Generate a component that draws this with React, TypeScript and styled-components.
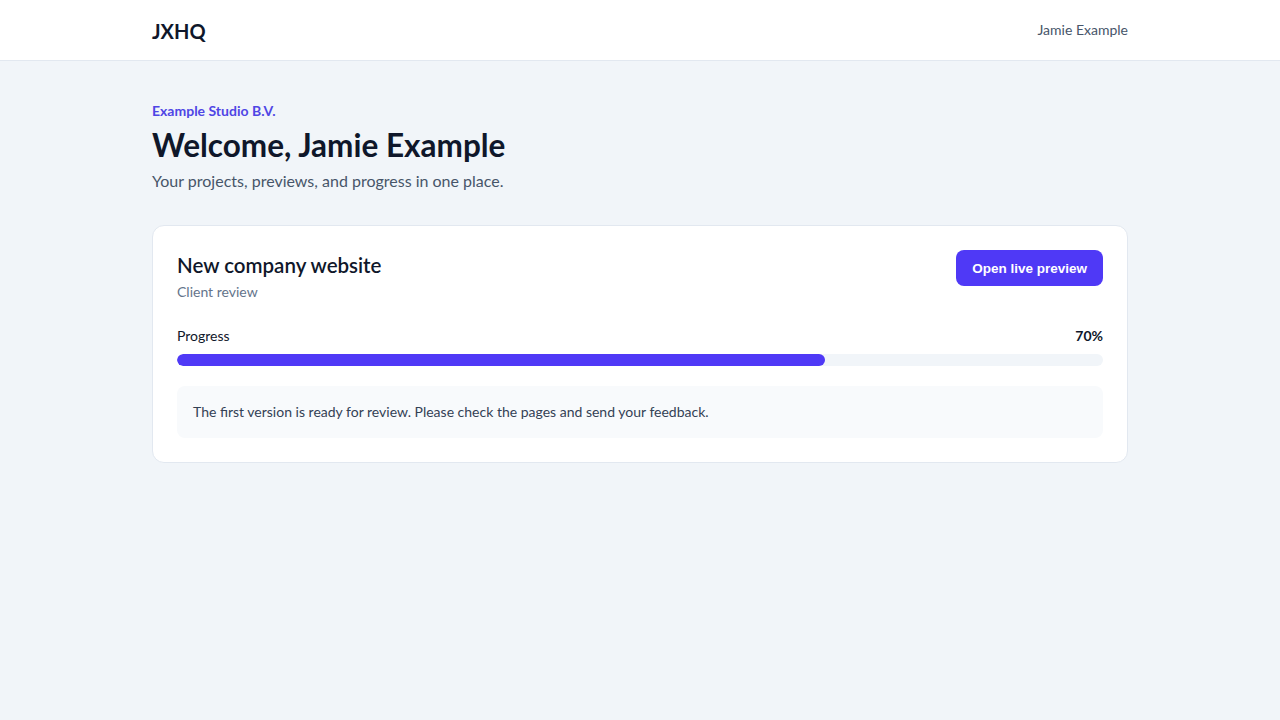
import styled, { createGlobalStyle } from "styled-components";

const GlobalStyle = createGlobalStyle`
  body {
    margin: 0;
    background-color: #f1f5f9;
    font-family: Lato, "Open Sans", sans-serif;
    line-height: 20px;
    color: #0f172a;
  }
`;

const Header = styled.header`
  background-color: white;
  border-bottom: 1px solid #e2e8f0;
  height: 61px;
  box-sizing: border-box;
`;

const Wrap = styled.div`
  width: 976px;
  margin: 0 auto;
`;

const HeaderInner = styled(Wrap)`
  height: 100%;
  display: flex;
  align-items: center;
  justify-content: space-between;
`;

const Logo = styled.div`
  font-size: 20px;
  line-height: 28px;
  font-weight: 700;
  color: #0f172a;
  margin-top: 2px;
`;

const UserName = styled.div`
  font-size: 14px;
  color: #475569;
`;

const Main = styled(Wrap)`
  padding-top: 40px;
`;

const Company = styled.div`
  font-size: 14px;
  line-height: 20px;
  font-weight: 700;
  color: #4f46e5;
`;

const Title = styled.h1`
  margin: 4px 0 0;
  font-size: 31.5px;
  line-height: 40px;
  font-weight: 700;
  color: #0f172a;
`;

const Subtitle = styled.p`
  margin: 4px 0 0;
  font-size: 16px;
  line-height: 24px;
  color: #475569;
`;

const Card = styled.section`
  margin-top: 32px;
  background-color: white;
  border: 1px solid #e2e8f0;
  border-radius: 12px;
  padding: 24px;
`;

const CardTop = styled.div`
  display: flex;
  justify-content: space-between;
  align-items: flex-start;
`;

const ProjectName = styled.h2`
  margin: 1px 0 0;
  font-size: 20.5px;
  line-height: 28px;
  font-weight: 600;
  color: #0f172a;
`;

const Status = styled.div`
  margin-top: 3px;
  font-size: 14px;
  line-height: 20px;
  color: #64748b;
`;

const Button = styled.button`
  height: 36px;
  padding: 0 16px;
  border: none;
  border-radius: 8px;
  background-color: #4f39f6;
  color: white;
  font-family: "Liberation Sans", Arial, sans-serif;
  font-size: 13.5px;
  font-weight: 700;
  cursor: pointer;
`;

const ProgressRow = styled.div`
  margin-top: 24px;
  display: flex;
  justify-content: space-between;
  font-size: 14px;
  line-height: 20px;
  color: #0f172a;
`;

const Percent = styled.span`
  font-weight: 700;
`;

const Track = styled.div`
  margin-top: 8px;
  height: 12px;
  border-radius: 999px;
  background-color: #f1f5f9;
  overflow: hidden;
`;

const Fill = styled.div`
  height: 100%;
  border-radius: 999px;
  background-color: #4f39f6;
`;

const Note = styled.div`
  margin-top: 20px;
  background-color: #f8fafc;
  border-radius: 8px;
  padding: 16px;
  font-size: 14px;
  line-height: 20px;
  color: #334155;
`;

export default function App() {
  const progress = 70;
  return (
    <>
      <GlobalStyle />
      <Header>
        <HeaderInner>
          <Logo>JXHQ</Logo>
          <UserName>Jamie Example</UserName>
        </HeaderInner>
      </Header>
      <Main>
        <Company>Example Studio B.V.</Company>
        <Title>Welcome, Jamie Example</Title>
        <Subtitle>Your projects, previews, and progress in one place.</Subtitle>
        <Card>
          <CardTop>
            <div>
              <ProjectName>New company website</ProjectName>
              <Status>Client review</Status>
            </div>
            <Button>Open live preview</Button>
          </CardTop>
          <ProgressRow>
            <span>Progress</span>
            <Percent>{progress}%</Percent>
          </ProgressRow>
          <Track>
            <Fill style={{ width: `${progress}%` }} />
          </Track>
          <Note>The first version is ready for review. Please check the pages and send your feedback.</Note>
        </Card>
      </Main>
    </>
  );
}
